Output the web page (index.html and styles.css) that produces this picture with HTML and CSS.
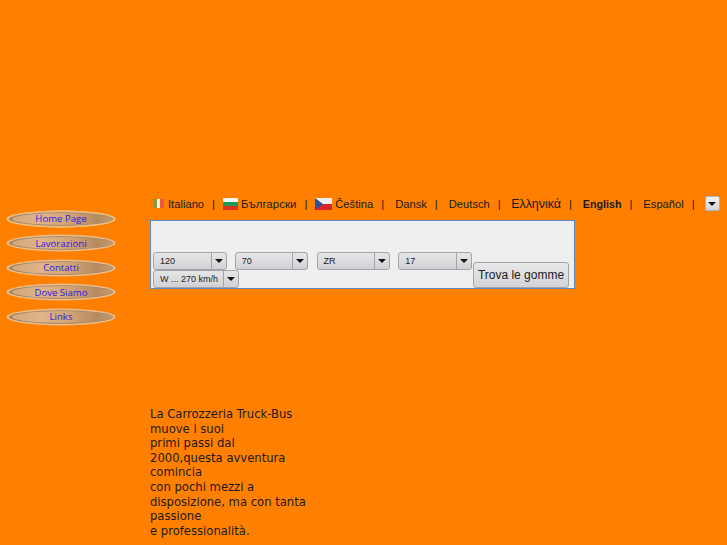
FILE: index.html
```html
<!DOCTYPE html>
<html lang="it">
<head>
    <meta charset="UTF-8">
    <meta name="viewport" content="width=device-width, initial-scale=1.0">
    <title>Carrozzeria Truck-Bus</title>
    <link rel="stylesheet" href="styles.css">
</head>
<body>

    <!-- Forma dei pulsanti del menu -->
    <svg class="defs" width="0" height="0">
        <defs>
            <linearGradient id="oval-fill" x1="0" y1="0" x2="1" y2="0">
                <stop offset="0" stop-color="#d0a878"/>
                <stop offset="0.3" stop-color="#e0b488"/>
                <stop offset="0.6" stop-color="#d0a274"/>
                <stop offset="0.85" stop-color="#b48a60"/>
                <stop offset="1" stop-color="#c49c70"/>
            </linearGradient>
            <symbol id="oval-shape" viewBox="0 0 110 20">
                <ellipse cx="55" cy="10" rx="54.5" ry="8.5" fill="#e8bc8c"/>
                <ellipse cx="55" cy="10" rx="52" ry="6.8" fill="#a08060"/>
                <ellipse cx="56" cy="10" rx="50" ry="6" fill="url(#oval-fill)"/>
            </symbol>
        </defs>
    </svg>

    <!-- Menu laterale -->
    <div class="side-menu">
        <a class="oval oval-active" href="#"><svg class="oval-bg"><use href="#oval-shape"/></svg><span>Home Page</span></a>
        <a class="oval" href="#"><svg class="oval-bg"><use href="#oval-shape"/></svg><span>Lavorazioni</span></a>
        <a class="oval" href="#"><svg class="oval-bg"><use href="#oval-shape"/></svg><span>Contatti</span></a>
        <a class="oval" href="#"><svg class="oval-bg"><use href="#oval-shape"/></svg><span>Dove Siamo</span></a>
        <a class="oval" href="#"><svg class="oval-bg"><use href="#oval-shape"/></svg><span>Links</span></a>
    </div>

    <div class="main">
        <!-- Lingue -->
        <div class="lang-bar">
            <svg class="flag flag-it" width="11" height="9" viewBox="0 0 11 9"><rect width="4" height="9" fill="#8a9a3c"/><rect x="4" width="3" height="9" fill="#f6efe2"/><rect x="7" width="4" height="9" fill="#ee5a3c"/></svg>
            <span>Italiano</span>
            <span class="sep">|</span>
            <svg class="flag" width="15" height="12" viewBox="0 0 15 12"><rect width="15" height="4" fill="#f6f6f6"/><rect y="4" width="15" height="4" fill="#1c9a58"/><rect y="8" width="15" height="4" fill="#e0301e"/></svg>
            <span class="cyr">Български</span>
            <span class="sep">|</span>
            <svg class="flag" width="17" height="12" viewBox="0 0 17 12"><rect width="17" height="6" fill="#f0f0f4"/><rect y="6" width="17" height="6" fill="#d8242c"/><path d="M0 0 L8 6 L0 12 Z" fill="#2c4fa0"/></svg>
            <span>Čeština</span>
            <span class="sep">|</span>
            <span class="plain">Dansk</span>
            <span class="sep">|</span>
            <span class="plain">Deutsch</span>
            <span class="sep">|</span>
            <span class="plain greek">Ελληνικά</span>
            <span class="sep">|</span>
            <span class="plain current">English</span>
            <span class="sep">|</span>
            <span class="plain">Español</span>
            <span class="sep">|</span>
            <span class="more-btn"><i class="arrow"></i></span>
        </div>

        <!-- Ricerca gomme -->
        <div class="search-box">
            <div class="search-fields">
                <div class="combo combo-size"><span class="combo-text">120</span><span class="combo-btn"><i class="arrow"></i></span></div>
                <div class="combo combo-size"><span class="combo-text">70</span><span class="combo-btn"><i class="arrow"></i></span></div>
                <div class="combo combo-size"><span class="combo-text">ZR</span><span class="combo-btn"><i class="arrow"></i></span></div>
                <div class="combo combo-size"><span class="combo-text">17</span><span class="combo-btn"><i class="arrow"></i></span></div>
                <div class="combo combo-speed"><span class="combo-text">W ... 270 km/h</span><span class="combo-btn"><i class="arrow"></i></span></div>
            </div>
            <button class="find-btn">Trova le gomme</button>
        </div>

        <p class="intro">
            La Carrozzeria Truck-Bus<br>
            muove i suoi<br>
            primi passi dal<br>
            2000,questa avventura comincia<br>
            con pochi mezzi a<br>
            disposizione, ma con tanta passione<br>
            e professionalità.
        </p>
    </div>

</body>
</html>
```

FILE: styles.css
```css
body {
    margin: 0;
    height: 545px;
    overflow: hidden;
    display: flex;
    background-color: #ff8000;
    color: #1a1a1a;
    font-family: "Liberation Sans", Arial, sans-serif;
}
.defs {
    position: absolute;
}
.side-menu {
    width: 150px;
    flex-shrink: 0;
    box-sizing: border-box;
    padding: 208.6px 0 0 6px;
    display: flex;
    flex-direction: column;
    gap: 4.5px;
}
.oval {
    position: relative;
    display: flex;
    align-items: center;
    justify-content: center;
    width: 110px;
    height: 20px;
    font-family: "Open Sans", sans-serif;
    font-size: 9.6px;
    color: #2c20e0;
    text-decoration: none;
}
.oval-bg {
    position: absolute;
    top: 0;
    left: 0;
    width: 110px;
    height: 20px;
}
.oval-active .oval-bg {
    filter: drop-shadow(0 0 0.5px #e8e020);
}
.oval span {
    position: relative;
}
.main {
    flex: 1;
    padding-top: 196px;
}
.lang-bar {
    height: 15px;
    margin-bottom: 9px;
    padding-left: 3px;
    display: flex;
    align-items: center;
    font-size: 11.2px;
    white-space: nowrap;
}
.flag {
    margin-right: 3px;
    flex-shrink: 0;
}
.flag-it {
    margin-right: 4px;
}
.cyr {
    font-size: 11.5px;
}
.sep {
    margin: 0 8px;
}
.plain {
    margin-left: 3px;
}
.greek {
    font-size: 12.4px;
    margin-left: 2.5px;
}
.current {
    font-weight: bold;
    font-size: 10.7px;
}
.more-btn {
    width: 15px;
    height: 15px;
    margin-left: 2px;
    box-sizing: border-box;
    display: flex;
    align-items: center;
    justify-content: center;
    background: linear-gradient(#f4f4f6, #d4d4d8);
    border: 1px solid #b0b0b0;
    border-radius: 2px;
}
.arrow {
    width: 0;
    height: 0;
    border-left: 4px solid transparent;
    border-right: 4px solid transparent;
    border-top: 4px solid #111;
}
.search-box {
    width: 425px;
    height: 69px;
    box-sizing: border-box;
    background: #efeff0;
    border: 1px solid #5a8ac0;
    padding: 31px 5px 0 2px;
    display: flex;
    align-items: flex-end;
}
.search-fields {
    width: 320px;
    flex-shrink: 0;
    display: flex;
    flex-wrap: wrap;
    gap: 0 8.1px;
}
.combo {
    display: flex;
    height: 18px;
    box-sizing: border-box;
    border: 1px solid #a4a4a8;
    border-radius: 3px;
    background: linear-gradient(#e6e6e8, #d2d2d6);
    font-size: 9px;
    line-height: 16px;
    color: #222;
}
.combo-size {
    width: 73.7px;
}
.combo-speed {
    width: 86px;
}
.combo-text {
    flex: 1;
    padding-left: 6px;
    white-space: nowrap;
}
.combo-btn {
    width: 14px;
    display: flex;
    align-items: center;
    justify-content: center;
    border-left: 1px solid #a4a4a8;
}
.find-btn {
    width: 96px;
    height: 26px;
    padding: 0;
    background: linear-gradient(#e8e8ea, #d4d4d8);
    border: 1px solid #a4a4a8;
    border-radius: 3px;
    color: #222;
    font-family: "Liberation Sans", Arial, sans-serif;
    font-size: 12px;
}
.intro {
    width: 160px;
    margin: 118px 0 0 0;
    font-family: "DejaVu Sans", sans-serif;
    font-size: 11.6px;
    line-height: 14.6px;
}
```
